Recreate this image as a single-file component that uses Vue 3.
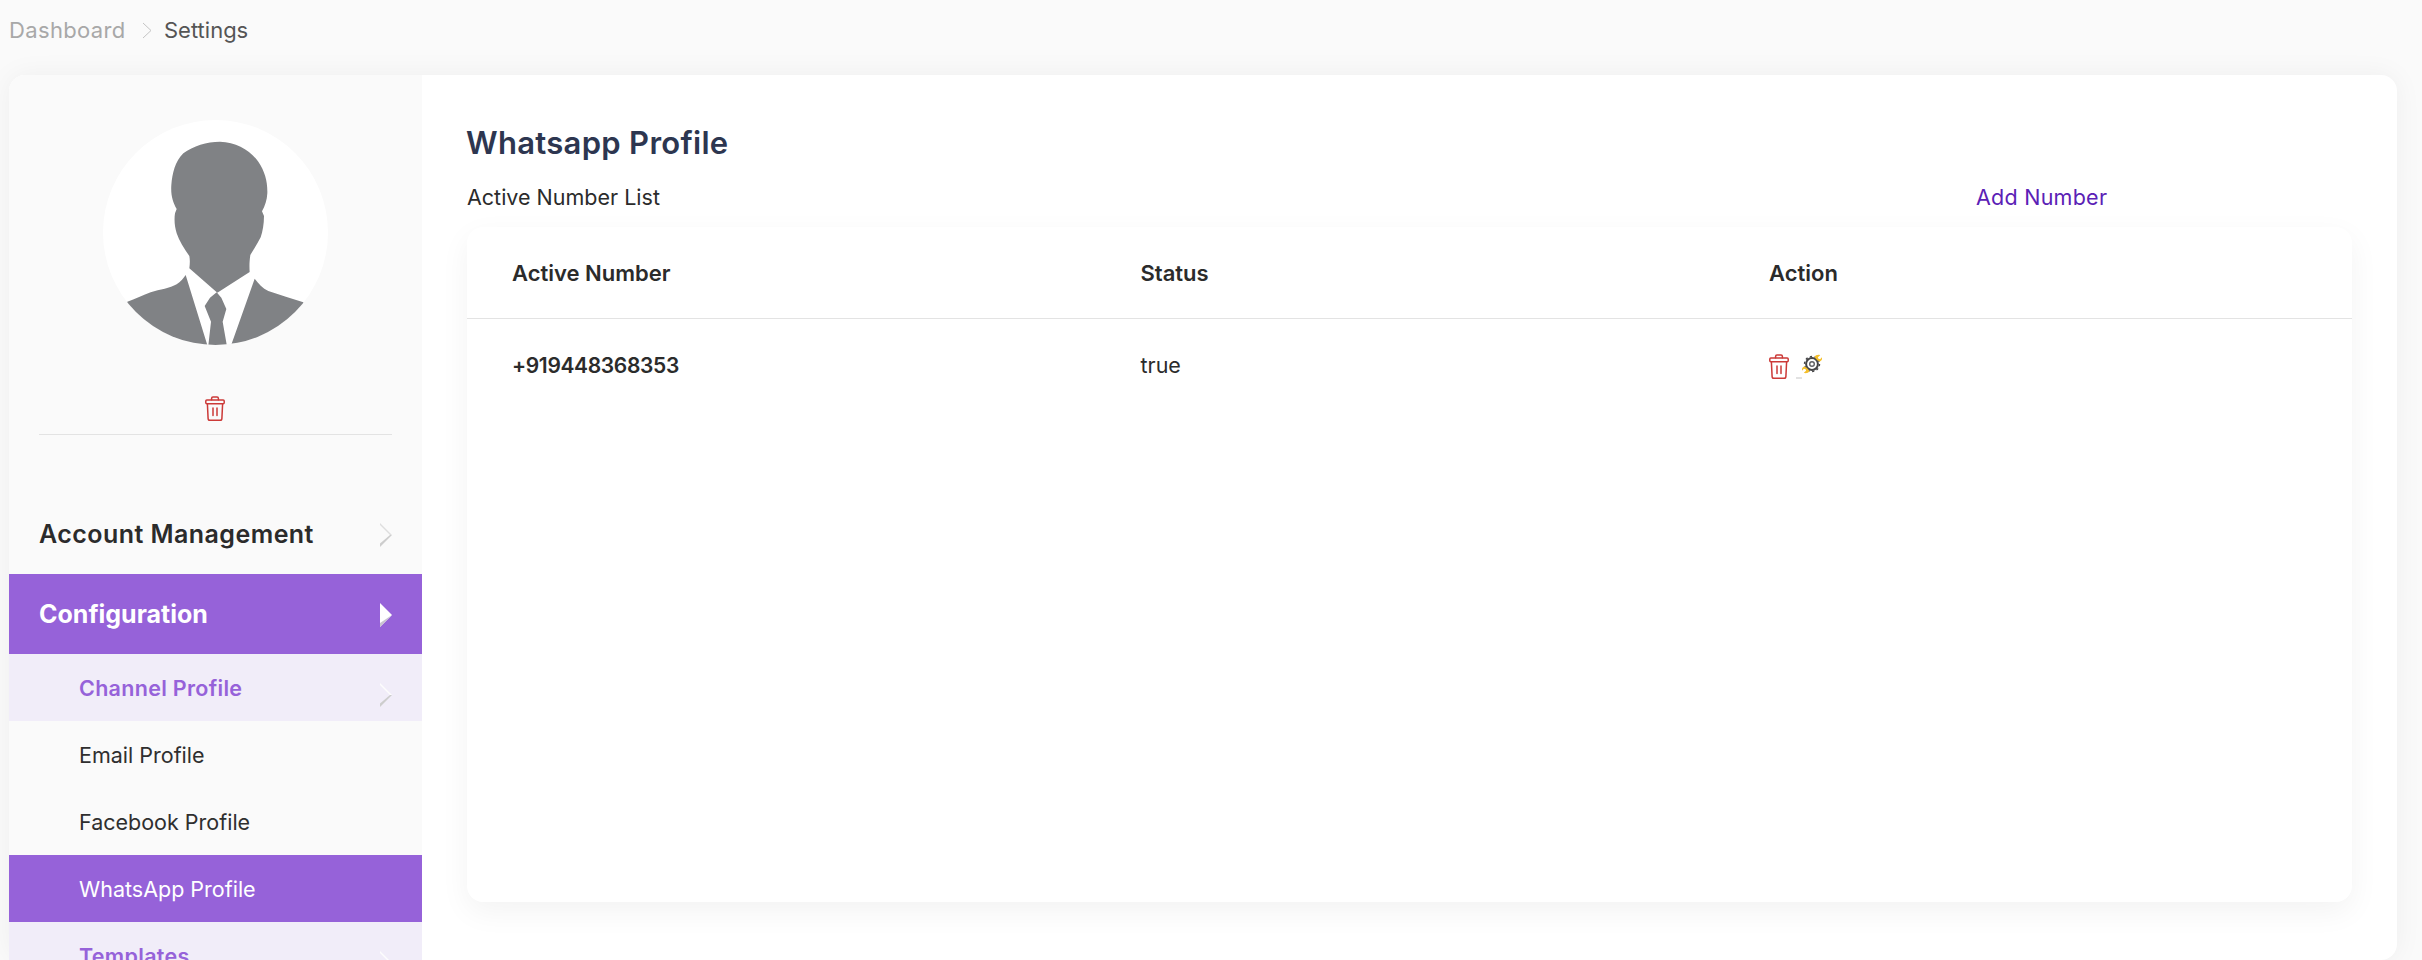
<script setup>
const submenu = [
  { label: 'Channel Profile', cls: 'tinted', chevron: true },
  { label: 'Email Profile', cls: '' },
  { label: 'Facebook Profile', cls: '' },
  { label: 'WhatsApp Profile', cls: 'active' },
  { label: 'Templates', cls: 'tinted', chevron: true }
]
</script>

<template>
  <div class="page">
    <nav class="crumbs">
      <span class="crumb-link">Dashboard</span>
      <svg class="crumb-sep" viewBox="0 0 10 17" width="10" height="17"><path d="M1 1l8 7.5L1 16" fill="none" stroke="#c4c4c4" stroke-width="1" /></svg>
      <span class="crumb-here">Settings</span>
    </nav>

    <section class="card">
      <aside class="sidebar">
        <div class="profile">
          <svg class="avatar" viewBox="309 360 675 675" width="225" height="225">
            <defs><clipPath id="disc"><circle cx="646.5" cy="697.5" r="337.5" /></clipPath></defs>
            <circle cx="646.5" cy="697.5" r="337.5" fill="#fff" />
            <g clip-path="url(#disc)" fill="#808285">
              <path d="M568 805C570 790 570 778 568 768C552 745 537 722 530 700C524 680 522 660 525 640L530 627C518 605 512 585 514 555C517 520 525 485 550 460C580 438 620 425 660 425C710 427 750 450 775 485C795 515 803 545 802 580C801 600 795 618 786 634L792 648C792 672 788 695 782 712C772 732 760 750 751 765C748 785 748 800 749 816L652 878Z" />
              <path d="M382 905C405 897 430 885 452 877C480 868 510 865 530 853C542 845 550 835 557 825L625 1045H300Z" />
              <path d="M910 907C875 896 840 885 805 873C788 865 775 850 764 836L690 1045H1000Z" />
              <path d="M650 877L664 893L679 927L668 965L682 1045H624L633 965L614 918L630 893Z" />
            </g>
          </svg>
          <svg class="trash" viewBox="0 0 20 25" width="20" height="25">
            <g fill="none" stroke="#cc3a38" stroke-width="1.5" stroke-linejoin="round" stroke-linecap="round">
              <rect x="0.8" y="4" width="18.4" height="3.8" rx="1" />
              <path d="M2.4 8l.7 14.400c0 1 .8 1.800 1.800 1.800h10.200c1 0 1.800-.8 1.800-1.800L17.600 8" />
              <path d="M6.600 3.800V2.400c0-.8.6-1.400 1.400-1.400h4c.8 0 1.400.6 1.400 1.400v1.400M8 12v7.500M12 12v7.500" />
            </g>
          </svg>
        </div>

        <div class="menu-item plain">
          <span>Account Management</span>
          <svg class="chev" viewBox="0 0 12 24" width="12" height="24"><path d="M0 0l12 12h-2L0 2z" fill="#dedede" /><path d="M12 12L0 24v-3.500L10 12z" fill="#cdcdcd" /></svg>
        </div>
        <div class="menu-item open">
          <span>Configuration</span>
          <svg class="chev" viewBox="0 0 12 24" width="12" height="24"><path d="M0 0l12 12L0 24z" fill="#fff" /><path d="M12 12L0 24v-4z" fill="#c9c4cf" /></svg>
        </div>

        <div v-for="item in submenu" :key="item.label" class="sub-item" :class="item.cls">
          <span>{{ item.label }}</span>
          <svg v-if="item.chevron" class="chev sub-chev" viewBox="0 0 12 24" width="12" height="24"><path d="M0 0l12 12h-2L0 2z" fill="#fdfdfd" /><path d="M12 12L0 24v-3.500L10 12z" fill="#cdcdcd" /></svg>
        </div>
      </aside>

      <main class="content">
        <h1 class="title">Whatsapp Profile</h1>
        <div class="list-head">
          <span class="list-name">Active Number List</span>
          <a class="add-number">Add Number</a>
        </div>
        <div class="table-card">
          <div class="row head">
            <span>Active Number</span>
            <span>Status</span>
            <span>Action</span>
          </div>
          <div class="row body">
            <span class="number">+919448368353</span>
            <span class="status">true</span>
            <span class="actions">
              <svg class="action-trash" viewBox="0 0 20 25" width="20" height="25">
                <g fill="none" stroke="#cc3a38" stroke-width="1.5" stroke-linejoin="round" stroke-linecap="round">
                  <rect x="0.8" y="4" width="18.4" height="3.8" rx="1" />
                  <path d="M2.4 8l.7 14.400c0 1 .8 1.800 1.800 1.800h10.200c1 0 1.800-.8 1.800-1.800L17.600 8" />
                  <path d="M6.600 3.800V2.400c0-.8.6-1.400 1.400-1.400h4c.8 0 1.400.6 1.400 1.400v1.400M8 12v7.500M12 12v7.500" />
                </g>
              </svg>
              <i class="alt-fleck"></i>
              <svg class="gear" viewBox="0 0 20 20" width="20" height="20">
                <circle cx="10" cy="10" r="5.900" fill="none" stroke="#454547" stroke-width="2" />
                <circle cx="10" cy="10" r="7.500" fill="none" stroke="#454547" stroke-width="1.400" stroke-dasharray="2.200 2.510" />
                <circle cx="10" cy="10" r="2.300" fill="none" stroke="#5f6064" stroke-width="1.400" />
                <path d="M12.500 3C13.500 .9 16.500 .2 18.200 1.200l-2.300 2 .5 1.600 1.700.5 2-2.200c.5 2-.7 4-2.700 4.500L15 6z" fill="#f5c02c" />
                <path d="M7.500 17C6.500 19.100 3.500 19.800 1.800 18.800l2.300-2-.5-1.600-1.700-.5-2 2.200c-.5-2 .7-4 2.700-4.500L5 14z" fill="#f5c02c" />
              </svg>
            </span>
          </div>
        </div>
      </main>
    </section>
  </div>
</template>

<style>
html, body { margin: 0; height: 960px; overflow: hidden; background: #fafafa; }
</style>

<style scoped>
.page {
  height: 960px;
  overflow: hidden;
  box-sizing: border-box;
  padding: 0 25px 0 9px;
  background: #fafafa;
  font-family: Inter, "Noto Sans", sans-serif;
  color: #2b2b2b;
}
.crumbs {
  height: 75px;
  box-sizing: border-box;
  padding-bottom: 15px;
  display: flex;
  align-items: center;
  font-size: 22px;
}
.crumb-link { color: #a8a8a8; width: 116px; letter-spacing: .35px; }
.crumb-sep { margin: 0 12px 0 17px; }
.crumb-here { color: #555; }
.card {
  display: flex;
  min-height: 885px;
  background: #fff;
  border-radius: 16px;
  box-shadow: 0 0 28px rgba(0, 0, 0, .05);
}
.sidebar {
  width: 413px;
  flex: none;
  height: 885px;
  overflow: hidden;
  background: #fafafa;
  border-top-left-radius: 16px;
}
.profile {
  margin: 0 30px;
  height: 360px;
  box-sizing: border-box;
  padding-top: 45px;
  border-bottom: 1px solid #e3e3e3;
  display: flex;
  flex-direction: column;
  align-items: center;
}
.avatar { flex: none; }
.trash { margin-top: 51px; margin-left: -1px; flex: none; }
.menu-item {
  height: 80px;
  padding: 0 30px;
  display: flex;
  justify-content: space-between;
  align-items: center;
  font-size: 25px;
  font-weight: 600;
}
.plain { margin-top: 59px; color: #2b2b2b; letter-spacing: .45px; }
.open { background: #9662d9; color: #fff; font-weight: 700; }
.menu-item .chev { margin-top: 2px; }
.sub-item {
  height: 67px;
  padding: 0 30px 0 70px;
  display: flex;
  justify-content: space-between;
  align-items: center;
  font-size: 21.5px;
  color: #2f2f2f;
}
.tinted { background: #f1edf9; color: #9662d9; font-weight: 600; letter-spacing: .3px; }
.active { background: #9662d9; color: #fff; }
.sub-chev { margin-top: 15px; }
.chev { flex: none; }
.content {
  flex: 1;
  min-width: 0;
  padding: 45px 45px 0;
}
.title {
  margin: 0 0 0 -1px;
  height: 45px;
  line-height: 45px;
  font-size: 31px;
  font-weight: 600;
  letter-spacing: .3px;
  color: #2d3650;
}
.list-head {
  height: 62px;
  padding-top: 17px;
  box-sizing: border-box;
  display: flex;
  font-size: 21.5px;
  line-height: 30px;
}
.list-name { color: #2b2b2b; width: 1509px; }
.add-number { color: #5b21b6; letter-spacing: .25px; }
.table-card {
  height: 675px;
  background: #fff;
  border-radius: 16px;
  box-shadow: 0 10px 30px rgba(0, 0, 0, .05);
}
.row {
  display: grid;
  grid-template-columns: repeat(3, 628.5px);
  padding-left: 45px;
  align-items: center;
}
.head {
  height: 91px;
  border-bottom: 1px solid #e3e3e3;
  font-size: 22px;
  font-weight: 600;
  color: #2b2b2b;
}
.body { height: 92px; font-size: 21.5px; }
.number { font-size: 21px; font-weight: 600; letter-spacing: -.35px; }
.actions { display: flex; align-items: flex-start; height: 25px; margin-top: 3px; }
.alt-fleck { flex: none; align-self: flex-end; width: 6px; height: 2px; margin-left: 7px; background: #e2e2e2; }
</style>
